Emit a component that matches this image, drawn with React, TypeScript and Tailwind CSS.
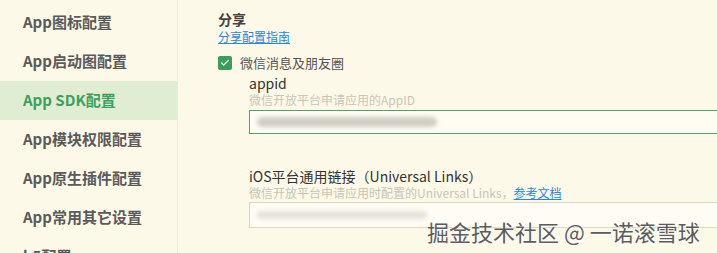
import { Check } from 'lucide-react';

const menu = [
  'App图标配置',
  'App启动图配置',
  'App SDK配置',
  'App模块权限配置',
  'App原生插件配置',
  'App常用其它设置',
  'h5配置',
];

const font = { fontFamily: '"Microsoft YaHei", "Noto Sans CJK SC", "Noto Sans", sans-serif' };

export default function App() {
  return (
    <div className="relative flex w-[717px] h-[253px] overflow-hidden bg-[#fdf9e8] text-[#333]" style={font}>
      {/* Sidebar */}
      <div className="w-[178px] shrink-0 border-r border-[#f1ead0] pt-[3px]">
        {menu.map((item) => (
          <div
            key={item}
            className={`h-[39px] flex items-center pl-[23px] text-[15px] font-bold ${
              item === 'App SDK配置' ? 'bg-[#e0edd3] text-[#3ca05c]' : 'text-[#5a5a5a]'
            }`}
          >
            {item}
          </div>
        ))}
      </div>

      {/* Content */}
      <div className="flex-1 min-w-0 pl-[40px] pt-[9px]">
        <div className="text-[14px] font-bold leading-[20px] text-[#444]">分享</div>
        <a className="block text-[12px] leading-[16px] text-[#2b86d9] underline">分享配置指南</a>

        <label className="mt-[9px] flex items-center gap-[8px]">
          <span className="w-[14px] h-[14px] rounded-[2px] bg-[#3c9d5b] flex items-center justify-center">
            <Check className="w-[10px] h-[10px] text-white" strokeWidth={3} />
          </span>
          <span className="text-[13px] leading-[18px] text-[#555]">微信消息及朋友圈</span>
        </label>

        <div className="pl-[31px]">
          <div className="text-[14px] leading-[18px] mt-[2px] text-[#333]">appid</div>
          <div className="text-[12px] leading-[16px] text-[#c8c5b8]">微信开放平台申请应用的AppID</div>
          <div className="mt-[2px] w-[520px] h-[24px] border border-[#4fa36c] bg-[#fffdf3] flex items-center pl-[7px]">
            <div className="h-[10px] w-[180px] rounded-full bg-[#cfcdc6] blur-[2px]" />
          </div>

          <div className="mt-[33px] text-[14px] leading-[18px] text-[#333] whitespace-nowrap">iOS平台通用链接（Universal Links）</div>
          <div className="text-[12px] leading-[16px] text-[#c8c5b8] whitespace-nowrap">
            微信开放平台申请应用时配置的Universal Links，
            <a className="text-[#2b86d9] underline">参考文档</a>
          </div>
          <div className="mt-[1px] w-[520px] h-[26px] border border-[#dcd8bd] bg-[#fffdf3] flex items-center pl-[7px]">
            <div className="h-[8px] w-[170px] rounded-full bg-[#e4e2da] blur-[2px]" />
          </div>
        </div>
      </div>

      {/* Watermark */}
      <div
        className="absolute left-[427px] top-[216px] whitespace-nowrap text-[22px] leading-[30px] text-[#5c5c5c]"
        style={{ textShadow: '0 0 2px #fff, 0 0 2px #fff, 0 0 1px #fff' }}
      >
        掘金技术社区 @ 一诺滚雪球
      </div>
    </div>
  );
}
